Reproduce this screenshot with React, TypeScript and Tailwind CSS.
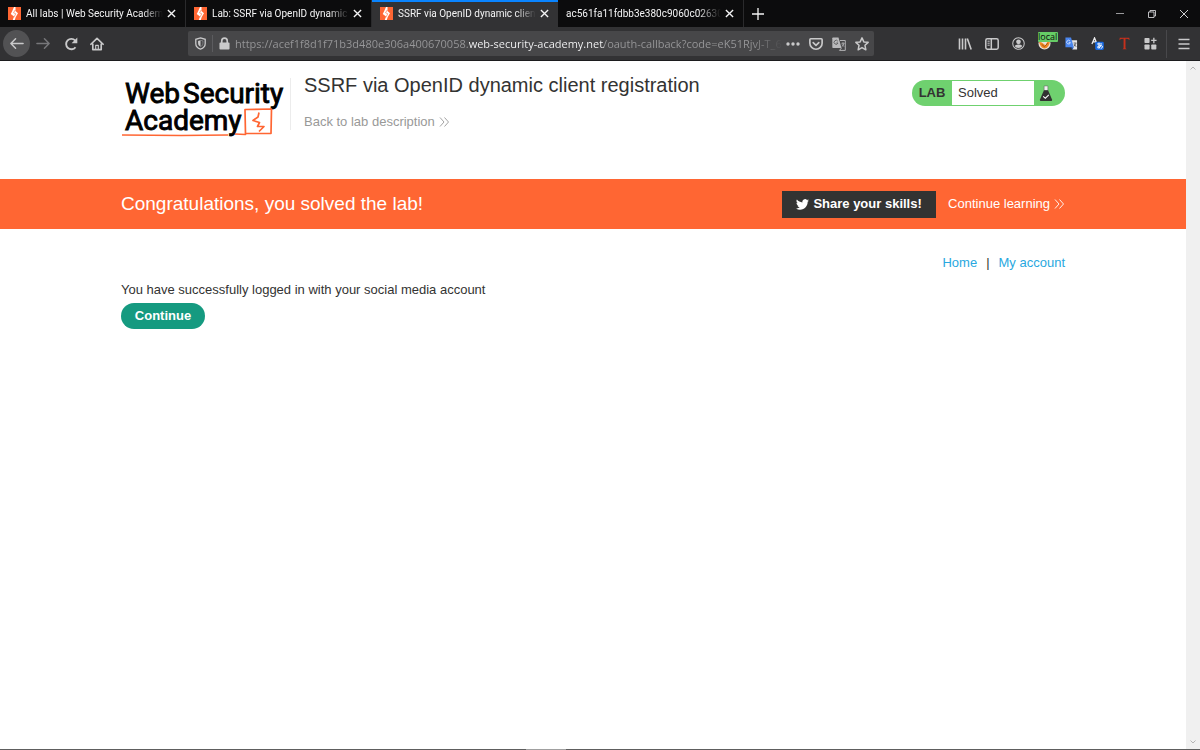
import React from "react";

const Bolt = ({ className = "" }: { className?: string }) => (
  <svg viewBox="0 0 26 26" className={className} aria-hidden="true">
    <rect width="26" height="26" fill="#ff6633" />
    <path d="M12 0 H15 V8 L20 12.500 L15.500 20 L13.500 26 H9.500 L12 19 L5.500 14 L8.500 8 Z" fill="#fff" />
    <path d="M14.500 6 L11 11.500 L15.500 13.500 L11.500 21" stroke="#ff6633" strokeWidth="1.200" fill="none" />
  </svg>
);

const Cross = () => (
  <svg viewBox="0 0 10 10" className="size-[9px]" stroke="currentColor" strokeWidth="1.5" aria-hidden="true">
    <path d="M1 1 L9 9 M9 1 L1 9" />
  </svg>
);

type TabProps = { title: string; active?: boolean; icon?: boolean };

const Tab = ({ title, active = false, icon = true }: TabProps) => (
  <div
    className={
      active
        ? "flex h-[27px] w-[186px] items-center border-t-2 border-[#0a84ff] bg-[#323234] pr-[6px] pb-[2px] pl-2"
        : "flex h-[27px] w-[186px] items-center border-r border-[#2a2a2c] bg-[#0c0c0d] pr-[6px] pl-2"
    }
  >
    <button type="button" className="flex min-w-0 flex-1 items-center gap-[5px]">
      {icon && <Bolt className="size-[13px] shrink-0" />}
      <span className="min-w-0 flex-1 overflow-hidden text-left text-[10px] leading-4 whitespace-nowrap [mask-image:linear-gradient(to_right,#000_85%,transparent)]">
        {title}
      </span>
    </button>
    <button type="button" aria-label="Close tab" className="flex size-4 items-center justify-center">
      <Cross />
    </button>
  </div>
);

const Tool = ({ label, children }: { label: string; children: React.ReactNode }) => (
  <button type="button" aria-label={label} className="relative flex size-[26px] shrink-0 items-center justify-center">
    {children}
  </button>
);

const Chevrons = () => (
  <svg viewBox="0 0 11 10" className="h-[10px] w-[11px]" fill="none" stroke="currentColor" strokeWidth="0.9" aria-hidden="true">
    <path d="M1 0.5 L5 5 L1 9.5 M5.5 0.5 L9.5 5 L5.5 9.5" />
  </svg>
);

const line = { fill: "none", stroke: "currentColor", strokeWidth: 1.6, strokeLinecap: "round", strokeLinejoin: "round" } as const;

const TitleBar = () => (
  <div className="flex h-[27px] items-center justify-between bg-[#0c0c0d] text-[#f4f4f5]">
    <div className="flex items-center font-[Roboto,'Noto_Sans',sans-serif]">
      <Tab title="All labs | Web Security Academ" />
      <Tab title="Lab: SSRF via OpenID dynamic c" />
      <Tab title="SSRF via OpenID dynamic client" active />
      <Tab title="ac561fa11fdbb3e380c9060c026300" icon={false} />
      <button type="button" aria-label="New tab" className="flex h-[27px] w-7 items-center justify-center">
        <svg viewBox="0 0 12 12" className="size-3" stroke="currentColor" strokeWidth="1.3" aria-hidden="true">
          <path d="M6 0 V12 M0 6 H12" />
        </svg>
      </button>
    </div>
    <div className="flex items-center text-[#d0d0d2]">
      <button type="button" aria-label="Minimize" className="flex h-[27px] w-8 items-center justify-center">
        <svg viewBox="0 0 8 8" className="size-2" stroke="#9a9a9c" aria-hidden="true"><path d="M0 3.5 H8" /></svg>
      </button>
      <button type="button" aria-label="Restore" className="flex h-[27px] w-8 items-center justify-center">
        <svg viewBox="0 0 8 8" className="size-2" fill="none" stroke="currentColor" strokeWidth="0.9" aria-hidden="true">
          <path d="M0.5 2 H6 V7.5 H0.5 Z M2 2 V0.5 H7.5 V6 H6" />
        </svg>
      </button>
      <button type="button" aria-label="Close window" className="flex h-[27px] w-8 items-center justify-center">
        <svg viewBox="0 0 8 8" className="size-2" stroke="currentColor" strokeWidth="1" aria-hidden="true"><path d="M0 0 L8 8 M8 0 L0 8" /></svg>
      </button>
    </div>
  </div>
);

const Toolbar = () => (
  <div className="flex h-[34px] items-center border-b border-[#1c1c1e] bg-[#323234] pl-[3px] text-[#c9c9ca]">
    <div className="flex w-[107px] items-center">
      <button type="button" aria-label="Back" className="flex size-[27px] items-center justify-center rounded-full bg-[#525254]">
        <svg viewBox="0 0 16 16" className="size-[15px]" {...line} aria-hidden="true"><path d="M15 8 H2 M7 3 L2 8 L7 13" /></svg>
      </button>
      <button type="button" aria-label="Forward" className="flex size-[27px] items-center justify-center text-[#77777a]">
        <svg viewBox="0 0 16 16" className="size-[15px]" {...line} aria-hidden="true"><path d="M1 8 H14 M9 3 L14 8 L9 13" /></svg>
      </button>
      <button type="button" aria-label="Reload" className="flex size-[27px] items-center justify-center">
        <svg viewBox="0 0 16 16" className="size-4" fill="none" stroke="currentColor" strokeWidth="1.9" aria-hidden="true">
          <path d="M12.5 11.2 A5.2 5.2 0 1 1 12.2 4.6" />
          <path d="M14.3 1.5 V7.2 H8.6 Z" fill="currentColor" stroke="none" />
        </svg>
      </button>
      <button type="button" aria-label="Home" className="flex size-[25px] items-center justify-center">
        <svg viewBox="0 0 16 16" className="size-3.5" {...line} strokeWidth="1.9" aria-hidden="true">
          <path d="M1 8.3 L8 1.5 L15 8.3 M3.2 8 V14.5 H12.8 V8" />
          <path d="M6.5 14 V9.5 H9.5 V14" strokeWidth="1.3" />
        </svg>
      </button>
    </div>

    <div className="mx-[78px] flex h-[25px] min-w-0 flex-1 items-center rounded-[2px] bg-[#474749]">
      <button type="button" aria-label="Tracking protection" className="flex h-[25px] w-6 items-center justify-center">
        <svg viewBox="0 0 16 16" className="size-[13px]" fill="none" stroke="currentColor" strokeWidth="1.6" aria-hidden="true">
          <path d="M8 1 L13.800 2.800 V8 C13.800 11.500 11 14 8 15 C5 14 2.200 11.500 2.200 8 V2.800 Z" />
          <path d="M8 4 V12 C6 11 5 9.500 5 7.500 V4.800 Z" fill="currentColor" stroke="none" />
          <path d="M8 4 L11 4.800 V7.500 C11 9.500 10 11 8 12" strokeWidth="0.5" />
        </svg>
      </button>
      <span className="h-[17px] w-px bg-[#5c5c5f]" />
      <button type="button" aria-label="Site information" className="flex h-[25px] w-[22px] items-center justify-center">
        <svg viewBox="0 0 12 14" className="h-[13px] w-[11px]" aria-hidden="true">
          <rect x="0.5" y="6" width="11" height="7.5" rx="1" fill="currentColor" />
          <path d="M3 6.5 V4.2 A3 3 0 0 1 9 4.2 V6.5" fill="none" stroke="currentColor" strokeWidth="1.8" />
        </svg>
      </button>
      <input
        aria-label="Address"
        readOnly
        defaultValue="https://acef1f8d1f71b3d480e306a400670058.web-security-academy.net/oauth-callback?code=eK51RjvJ-T_6vQ"
        className="h-[25px] min-w-0 flex-1 bg-[linear-gradient(to_right,#98989a_233px,#f9f9fa_233px,#f9f9fa_369px,#98989a_369px,#98989a_515px,transparent_548px)] bg-clip-text p-0 text-[11px] text-transparent outline-none"
      />
      <div className="flex items-center pr-[1px]">
        <button type="button" aria-label="Page actions" className="flex size-[23px] items-center justify-center">
          <svg viewBox="0 0 14 4" className="h-1 w-3.5" fill="currentColor" aria-hidden="true">
            <circle cx="2" cy="2" r="1.7" /><circle cx="7" cy="2" r="1.7" /><circle cx="12" cy="2" r="1.7" />
          </svg>
        </button>
        <button type="button" aria-label="Save to Pocket" className="flex size-[23px] items-center justify-center">
          <svg viewBox="0 0 16 16" className="size-3.5" {...line} strokeWidth="1.9" aria-hidden="true">
            <path d="M2 2 H14 Q15 2 15 3 V7 A7 7 0 0 1 1 7 V3 Q1 2 2 2 Z M4.8 6.5 L8 9.5 L11.2 6.5" />
          </svg>
        </button>
        <button type="button" aria-label="Translate page" className="flex size-[23px] items-center justify-center">
          <svg viewBox="0 0 14 14" className="size-3.5" aria-hidden="true">
            <path d="M1 0.5 H6.5 L9.5 11 H1 Q0.3 11 0.3 10.3 V1.2 Q0.3 0.5 1 0.5 Z" fill="#b9b9bb" />
            <path d="M8 3.5 H13.3 V13.4 H7.5 L9.5 11" fill="none" stroke="#b0b0b2" />
            <path d="M5.8 4.2 A2 2 0 1 0 6 6 H4.3" fill="none" stroke="#5c5c5e" strokeWidth="0.9" />
            <path d="M9.500 6.300 H12.500 M11 5.300 V6.300 M12 6.500 Q11.500 8.500 9.700 9.600 M10 7.300 L12 9.600" fill="none" stroke="#b0b0b2" strokeWidth="0.9" />
          </svg>
        </button>
        <button type="button" aria-label="Bookmark" className="flex size-[23px] items-center justify-center">
          <svg viewBox="0 0 16 16" className="size-3.5" {...line} strokeWidth="1.7" aria-hidden="true">
            <path d="M8 1 L10.1 5.6 L15 6.1 L11.4 9.5 L12.4 14.6 L8 12.1 L3.6 14.6 L4.6 9.5 L1 6.1 L5.9 5.6 Z" />
          </svg>
        </button>
      </div>
    </div>

    <div className="flex w-[212px] items-center justify-between">
      <Tool label="Library">
        <svg viewBox="0 0 14 14" className="size-3.5" fill="none" stroke="currentColor" strokeWidth="1.6" aria-hidden="true">
          <path d="M1.500 1.500 V12.500 M4.500 1.500 V12.500 M7.500 1.500 V12.500 M9.300 1.500 L13.200 12.500" />
        </svg>
      </Tool>
      <Tool label="Sidebars">
        <svg viewBox="0 0 14 12" className="h-3 w-3.5" fill="none" stroke="currentColor" strokeWidth="1.5" aria-hidden="true">
          <rect x="0.8" y="0.8" width="12.4" height="10.4" rx="1.6" />
          <path d="M6.3 1 V11" />
          <path d="M2.5 3.2 H4.7 M2.5 5.2 H4.7 M2.5 7.2 H4.7" strokeWidth="1" />
        </svg>
      </Tool>
      <Tool label="Account">
        <svg viewBox="0 0 14 14" className="size-[13px]" aria-hidden="true">
          <circle cx="7" cy="7" r="6.2" fill="none" stroke="currentColor" strokeWidth="1.1" />
          <circle cx="7" cy="5.2" r="2.5" fill="currentColor" />
          <path d="M2.8 9.6 Q4 8 7 8 Q10 8 11.2 9.6 Q9.8 11.8 7 11.8 Q4.2 11.8 2.8 9.6 Z" fill="currentColor" />
        </svg>
      </Tool>
      <Tool label="Proxy switcher">
        <svg viewBox="0 0 14 14" className="size-[13px]" aria-hidden="true">
          <circle cx="7" cy="7" r="6.5" fill="#e9e1d8" />
          <path d="M1 5 Q3 12 7 12.5 Q12 12 13 4 L10 5.5 L8 9 L4 6 Z" fill="#f08a24" />
          <path d="M4 8 L7 10.5 L10.5 6.5" fill="none" stroke="#a8500e" strokeWidth="1" />
        </svg>
        <span className="absolute top-[1px] left-[6px] flex h-[10px] w-5 items-center justify-center rounded-[1px] bg-[#66cc66] text-[9px] leading-none text-[#0c0c0d]">
          local
        </span>
      </Tool>
      <Tool label="Google Translate">
        <svg viewBox="0 0 14 14" className="size-[13px]" aria-hidden="true">
          <path d="M6 3.5 H13 V13.5 H8 Z" fill="#e4e4e6" />
          <path d="M0.5 0.5 H6.5 L9.5 11 H0.5 Z" fill="#4a86ee" />
          <path d="M9.5 11 H6 L8 13.5 Z" fill="#2458b8" />
          <path d="M5.5 4.4 A2 2 0 1 0 5.8 6 H4" fill="none" stroke="#d7e5ff" strokeWidth="0.9" />
          <path d="M9.3 6.5 H12.3 M11.7 6.8 L9.8 10 M9.8 7.8 L12 10.5" fill="none" stroke="#55555a" strokeWidth="1" />
        </svg>
      </Tool>
      <Tool label="Translator">
        <svg viewBox="0 0 14 14" className="size-[13px]" aria-hidden="true">
          <path d="M1 7.5 L3.8 1 L6.5 7.5 M2 5.3 H5.5" fill="none" stroke="#ededee" strokeWidth="1.4" />
          <rect x="4.5" y="5" width="9.3" height="9" rx="1.5" fill="#1769e0" />
          <path d="M6.5 7.5 H12 M8.6 6 Q8.2 10 9.3 12.3 M11 8.5 Q10 12 7.5 12 Q6 10 9.5 9.3 Q13.5 9 12 11.5 L10.5 12.5" fill="none" stroke="#fff" strokeWidth="1" />
        </svg>
      </Tool>
      <Tool label="Text tool">
        <svg viewBox="0 0 12 14" className="h-[13px] w-[11px]" aria-hidden="true">
          <path d="M0.8 0.8 H11.2 L11.5 3.5 Q10.5 1.9 7.1 1.9 V12.2 L8.5 13.3 H3.8 L5 12.2 V1.9 Q1.5 1.9 0.5 3.5 Z" fill="#c5301c" />
        </svg>
      </Tool>
      <Tool label="Extensions">
        <svg viewBox="0 0 14 14" className="size-[13px]" fill="currentColor" aria-hidden="true">
          <rect x="0.5" y="1" width="5.5" height="5.5" rx="0.8" />
          <rect x="0.5" y="8" width="5.5" height="5.5" rx="0.8" />
          <rect x="7.8" y="8" width="5.5" height="5.5" rx="0.8" />
          <path d="M9.9 0.8 H11.3 V3 H13.5 V4.4 H11.3 V6.6 H9.9 V4.4 H7.7 V3 H9.9 Z" />
        </svg>
      </Tool>
    </div>
    <div className="ml-[2px] flex h-7 w-[34px] items-center justify-center border-l border-[#48484b]">
      <button type="button" aria-label="Open menu" className="flex size-6 items-center justify-center">
        <svg viewBox="0 0 12 12" className="size-3" stroke="currentColor" strokeWidth="1.4" aria-hidden="true">
          <path d="M0.5 1.5 H11.5 M0.5 6 H11.5 M0.5 10.5 H11.5" />
        </svg>
      </button>
    </div>
  </div>
);

const Logo = () => (
  <svg viewBox="0 0 166 60" className="h-[60px] w-[166px] shrink-0" role="img" aria-label="Web Security Academy">
    <g fontFamily="Roboto, sans-serif" fontSize="28" fontWeight="400" fill="#000" stroke="#000" strokeWidth="0.9">
      <text x="4" y="25">Web</text>
      <text x="62" y="25">Security</text>
      <text x="4" y="52">Academy</text>
    </g>
    <g fill="none" stroke="#ff6633" strokeLinejoin="round">
      <path d="M1 57 L60 57.500 L107 57 M114 56 L124.500 56.500 L124 31.500 L150.500 31 L150 55.500 L125 55.500" strokeWidth="1.7" />
      <path d="M138 34.500 L137 39 L132 42.500 L138.500 44.500 L136.500 48.500 L143 48.500 L138 53.500" strokeWidth="1.700" />
    </g>
  </svg>
);

export default function App() {
  return (
    <div className="flex min-h-screen flex-col bg-white font-['Liberation_Sans',Arial,sans-serif] text-[#333332]">
      <header className="font-['Open_Sans','Noto_Sans',sans-serif]">
        <TitleBar />
        <Toolbar />
      </header>

      <div className="flex flex-1">
        <main className="min-w-0 flex-1 text-[13px] leading-4">
          <section className="mx-auto flex h-[118px] max-w-[944px] items-start pt-[17px]">
            <Logo />
            <div className="ml-[3px] flex h-[52px] min-w-0 flex-1 flex-col self-start border-l border-[#ececec] pl-[13px]">
              <h1 className="text-xl leading-[14px]">SSRF via OpenID dynamic client registration</h1>
              <a href="#description" className="mt-[22px] flex items-center gap-1 text-[#999998]">
                Back to lab description <Chevrons />
              </a>
            </div>
            <div className="mt-[2px] flex h-[26px] w-[153px] items-stretch overflow-hidden rounded-full bg-[#6fd16f]">
              <span className="flex w-10 items-center justify-center font-bold">LAB</span>
              <span className="my-px flex flex-1 items-center bg-white pl-[6px]">Solved</span>
              <span className="flex w-[31px] items-center pl-[5px]">
                <svg viewBox="0 0 14 18" className="h-[17px] w-[14px]" aria-hidden="true">
                  <path d="M5 1 H9 V6 H5 Z" fill="#f2f2f2" stroke="#6a6a68" strokeWidth="0.6" />
                  <path d="M4.800 5.500 H9.200 L13.500 15.500 Q13.800 17 12.400 17 H1.600 Q0.200 17 0.500 15.500 Z" fill="#333332" />
                  <path d="M4 12 L6.300 14 L10 10.500" fill="none" stroke="#fff" strokeWidth="1.100" />
                </svg>
              </span>
            </div>
          </section>

          <section className="bg-[#ff6633] text-white">
            <div className="mx-auto flex h-[50px] max-w-[944px] items-center">
              <h2 className="flex-1 text-[19px] leading-6">Congratulations, you solved the lab!</h2>
              <button type="button" className="flex h-[27px] w-[154px] items-center justify-center gap-1 bg-[#333332] font-bold">
                <svg viewBox="0 0 24 20" className="h-[11px] w-[13px]" fill="#fff" aria-hidden="true">
                  <path d="M24 2.400c-.9.400-1.800.7-2.800.8 1-.6 1.800-1.600 2.200-2.700-1 .6-2 1-3.100 1.200A4.900 4.900 0 0 0 11.900 6.200C7.800 6 4.200 4 1.700.9a4.900 4.900 0 0 0 1.500 6.600c-.8 0-1.600-.2-2.200-.6v.1c0 2.300 1.700 4.300 3.900 4.800-.7.200-1.500.2-2.200.1.600 2 2.400 3.400 4.600 3.400A9.900 9.900 0 0 1 0 17.300 13.900 13.900 0 0 0 7.500 19.500c9.100 0 14.300-7.700 14-14.600 1-.7 1.800-1.600 2.500-2.500z" />
                </svg>
                Share your skills!
              </button>
              <a href="#learning" className="ml-3 flex items-center gap-1">
                Continue learning <Chevrons />
              </a>
            </div>
          </section>

          <section className="mx-auto max-w-[944px] pt-[26px]">
            <nav className="flex justify-end gap-[9px]">
              <a href="#home" className="text-[#29a8e0]">Home</a>
              <span>|</span>
              <a href="#account" className="text-[#29a8e0]">My account</a>
            </nav>
            <p className="mt-[11px]">You have successfully logged in with your social media account</p>
            <button type="button" className="mt-[5px] h-[26px] w-[84px] rounded-full bg-[#159a80] font-bold text-white">
              Continue
            </button>
          </section>
        </main>

        <div className="flex w-[14px] shrink-0 flex-col items-center justify-between bg-[#f0f0f0] py-[5px] text-[#b4b4b4]" aria-hidden="true">
          <svg viewBox="0 0 6 4" className="h-1 w-1.5" fill="none" stroke="currentColor"><path d="M0.500 3.500 L3 1 L5.500 3.500" /></svg>
          <svg viewBox="0 0 6 4" className="h-1 w-1.5" fill="none" stroke="currentColor"><path d="M0.500 0.500 L3 3 L5.500 0.500" /></svg>
        </div>
      </div>

      <footer className="flex h-px justify-center bg-[#5e5e5e] pr-[108px]">
        <span className="h-px w-10 bg-[#a0a0a0]" />
      </footer>
    </div>
  );
}
